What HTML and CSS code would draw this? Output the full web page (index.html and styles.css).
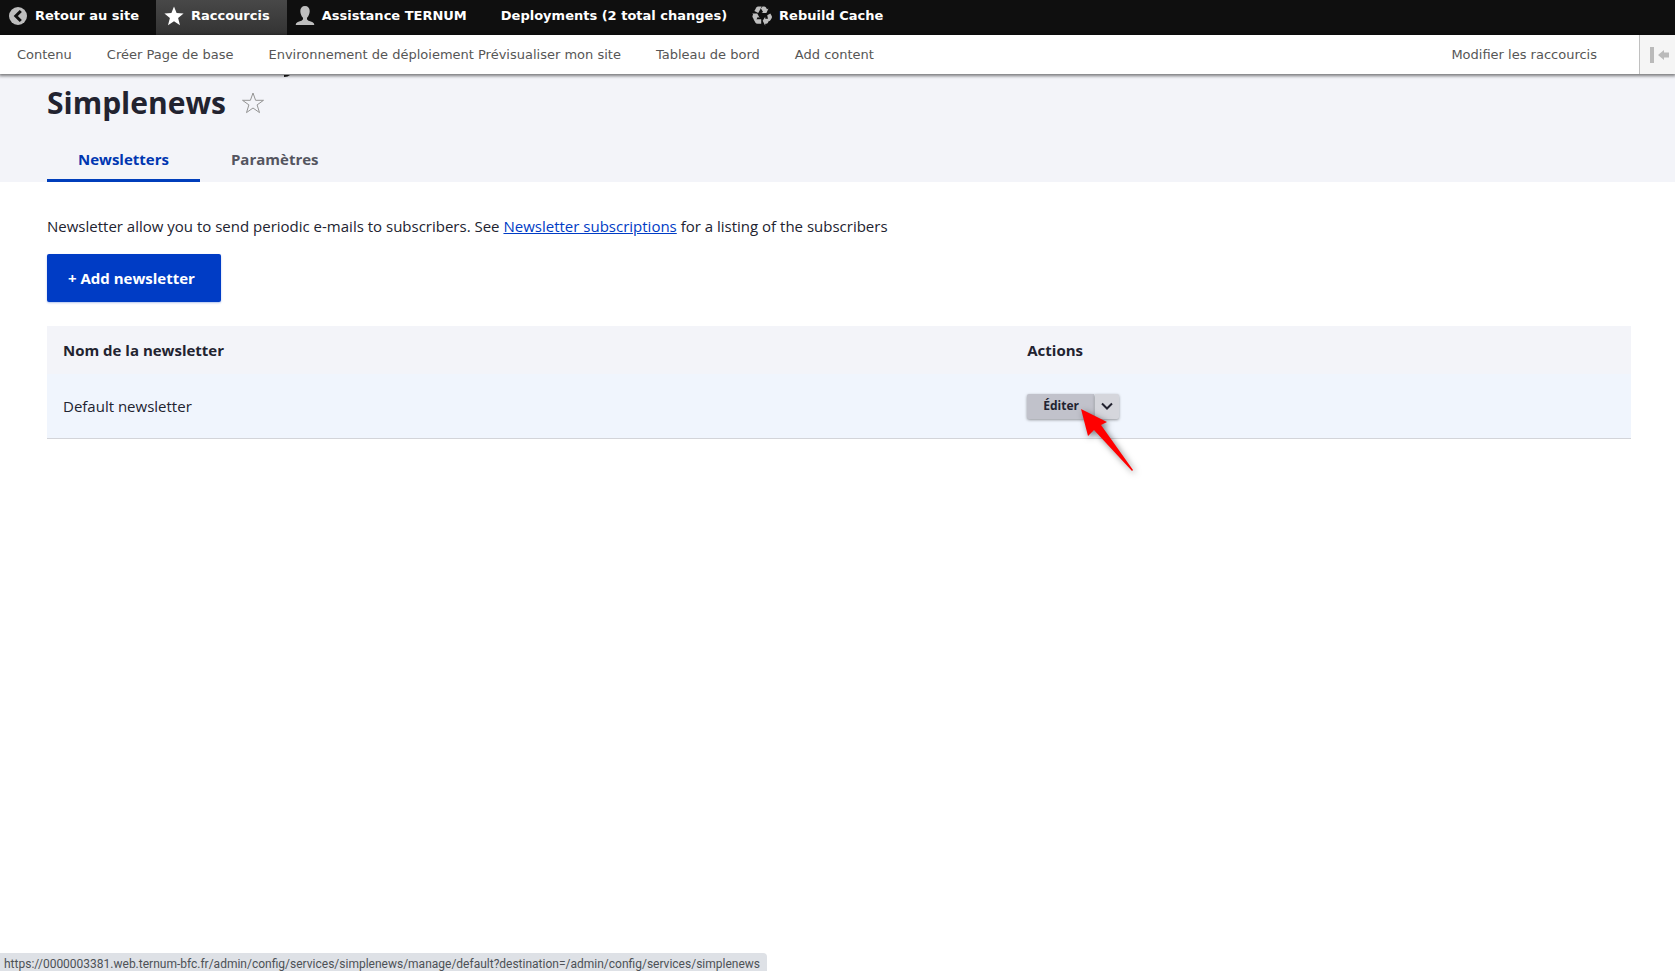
FILE: index.html
```html
<!DOCTYPE html>
<html lang="fr">
<head>
<meta charset="utf-8">
<title>Simplenews</title>
<link rel="stylesheet" href="styles.css">
</head>
<body>
<nav class="toolbar" aria-label="Barre d'outils">
  <a class="tool tool-icon" href="#"><svg class="icon" viewBox="0 0 20 20"><circle cx="10" cy="10" r="9" fill="#bebebe"/><path d="M12.8 5 7.800 10l5 5" fill="none" stroke="#0f0f0f" stroke-width="3"/></svg>Retour au site</a>
  <a class="tool tool-icon tool-active" href="#"><svg class="icon" viewBox="0 0 20 20"><path d="M10 .4l2.600 6.700 7 .4-5.500 4.500 1.900 7.200L10 15.200 4 19.200 5.900 12 .4 7.500l7-.4z" fill="#fff"/></svg>Raccourcis</a>
  <a class="tool tool-icon" href="#"><svg class="icon" viewBox="0 0 20 20"><path d="M10 0C7 0 5.300 2.100 5.300 5c0 2.800 1.200 5.300 2.500 6.600.6 1.500.1 2.600-1.300 3.100C3 15.800.8 16.600.8 18.200V19h18.400v-.8c0-1.600-2.200-2.400-5.700-3.500-1.400-.5-1.900-1.600-1.300-3.100 1.300-1.300 2.500-3.800 2.500-6.600C14.700 2.100 13 0 10 0z" fill="#bebebe"/></svg>Assistance TERNUM</a>
  <a class="tool" href="#">Deployments (2 total changes)</a>
  <a class="tool tool-icon" href="#"><svg class="icon" viewBox="0 0 20 20"><g fill="#bebebe"><path d="M6.200.4h3.500L7.400 5 6.200 7 2.400 4.900 4.300 1.600Q5 .4 6.200.4z"/><path d="M10.500.4h1.600q1.200 0 1.900 1.200l1 1.700 1.500-.9-2.100 4.600H9.500l1.600-1-2.200-3.600z"/><path d="M15.200 9.200 18.300 7.400l1.300 2.300q.8 1.400-.1 2.700l-1.100 1.800q-.6 1-1.900 1z"/><path d="M10.700 14.700l2.500-4v2h4.600l-1.900 4q-.5 1.100-1.800 1.100h-.9v2z"/><path d="M4.300 13.200h4.900v4.600H5.600q-1.600 0-2.300-1.400L1.200 12.600z"/><path d="M.3 7.600h5l2.300 4.500-1.800-1-2.400 4.100L.7 11.600q-.6-1.200 0-2.300l.4-.8z"/></g></svg>Rebuild Cache</a>
</nav>
<nav class="tray" aria-label="Raccourcis">
  <a class="shortcut" href="#">Contenu</a>
  <a class="shortcut" href="#">Créer Page de base</a>
  <a class="shortcut" href="#">Environnement de déploiement Prévisualiser mon site</a>
  <a class="shortcut" href="#">Tableau de bord</a>
  <a class="shortcut" href="#">Add content</a>
  <a class="shortcut shortcut-edit" href="#">Modifier les raccourcis</a>
  <button class="orient" type="button" aria-label="Orientation verticale"><svg class="orient-icon" viewBox="0 0 20 16"><path d="M0 0h4v16H0zM8 8l6-5v2.500h5v5h-5V13z" fill="#bababa"/></svg></button>
</nav>
<header class="header">
  <svg class="tail" viewBox="0 0 7 3" aria-hidden="true"><path d="M0 0h6Q4 2 0 2z" fill="#111"/></svg>
  <div class="title-row">
    <h1 class="title">Simplenews</h1>
    <button class="star" type="button" aria-label="Ajouter aux raccourcis"><svg class="star-icon" viewBox="0 0 24 24"><path d="M12 2l2.600 7.300h7.900l-6.400 4.600 2.400 7.700L12 17l-6.500 4.600 2.400-7.700L1.500 9.300h7.900z" fill="none" stroke="#949494" stroke-width="1"/></svg></button>
  </div>
  <nav class="tabs" aria-label="Onglets">
    <a class="tab tab-active" href="#">Newsletters</a>
    <a class="tab" href="#">Paramètres</a>
  </nav>
</header>
<main class="content">
  <p class="help">Newsletter allow you to send periodic e-mails to subscribers. See <a class="link" href="#">Newsletter subscriptions</a> for a listing of the subscribers</p>
  <a class="add" href="#">+ Add newsletter</a>
  <table class="table">
    <thead><tr><th class="name-col">Nom de la newsletter</th><th>Actions</th></tr></thead>
    <tbody><tr><td>Default newsletter</td><td>
      <div class="dropbutton">
        <a class="edit" href="#">Éditer</a><button class="toggle" type="button" aria-label="Lister les actions"><svg class="chevron" viewBox="0 0 14 9"><path d="M2 1.500l5 5 5-5" fill="none" stroke="#222330" stroke-width="2"/></svg></button>
        <svg class="pointer" viewBox="0 0 60 70" aria-hidden="true"><path d="M3 3 29 16 23 19 55 64 54 65 16 24 10 30z" fill="#f00"/></svg>
      </div>
    </td></tr></tbody>
  </table>
</main>
<div class="status">https://0000003381.web.ternum-bfc.fr/admin/config/services/simplenews/manage/default?destination=/admin/config/services/simplenews</div>
</body>
</html>
```
FILE: styles.css
```css
* { box-sizing: border-box; }
body {
  min-height: 100vh;
  margin: 0;
  background: #fff;
  color: #222330;
  font: 15px/24px "Segoe UI", "Open Sans", "Noto Sans", sans-serif;
}
a { color: inherit; text-decoration: none; }
button { border: 0; padding: 0; background: none; }
svg { display: block; }

.toolbar {
  display: flex;
  height: 35px;
  background: #0f0f0f;
  color: #fff;
  font: bold 13px/31px Verdana, "DejaVu Sans", sans-serif;
}
.tool { display: flex; padding: 0 17px; white-space: nowrap; }
.tool-icon { padding-left: 8px; }
.tool-active { background: linear-gradient(#484848, #333); }
.icon { width: 20px; height: 20px; margin: 6px 7px 0 0; }

.tray {
  position: relative;
  z-index: 1;
  display: flex;
  height: 39px;
  background: #fff;
  color: #565656;
  font: 13px/39px Verdana, "DejaVu Sans", sans-serif;
  box-shadow: 0 1px 3px 1px rgba(0, 0, 0, 0.5);
}
.shortcut { padding: 0 18px 0 17px; white-space: nowrap; }
.shortcut-edit { margin-left: auto; padding-right: 42px; }
.orient {
  width: 36px;
  padding-left: 10px;
  border-left: 1px solid #c0c0c0;
  background: #f5f5f5;
}
.orient-icon { width: 20px; height: 16px; }

.header {
  position: relative;
  height: 108px;
  padding: 7px 47px 0;
  background: #f3f4f9;
}
.tail { position: absolute; z-index: 2; left: 284px; top: 1px; width: 7px; height: 3px; }
.title-row { display: flex; align-items: center; gap: 15px; height: 43px; }
.title { margin: 0; font-size: 30px; line-height: 40px; font-weight: 700; }
.star-icon { width: 24px; height: 24px; }
.tabs { display: flex; height: 58px; }
.tab {
  padding: 23px 31px 0;
  color: #545560;
  font-weight: 700;
}
.tab-active { color: #0036b1; border-bottom: 3px solid #003ebb; }

.content { padding: 32px 44px 48px 47px; }
.help { margin: 0 0 16px; }
.link { color: #003cc5; text-decoration: underline; }
.add {
  display: inline-block;
  padding: 12px 26px 12px 21px;
  border-radius: 2px;
  background: #003cc5;
  color: #fff;
  font-weight: 700;
  box-shadow: 0 1px 2px rgba(0, 60, 197, 0.3);
}
.table { width: 100%; margin-top: 24px; border-collapse: separate; border-spacing: 0; }
.name-col { width: 61%; }
th { height: 48px; padding: 0 16px; background: #f3f4f9; text-align: left; }
td { height: 65px; padding: 0 16px; background: #f0f5fd; border-bottom: 1px solid #d3d4d9; }
th + th, td + td { padding-left: 14px; }

.dropbutton { position: relative; display: flex; gap: 1px; width: max-content; color: #222330; }
.edit, .toggle { height: 25px; box-shadow: 0 1px 3px rgba(0, 0, 0, 0.4); }
.edit {
  padding: 0 15px 0 16px;
  border-radius: 2px 0 0 2px;
  background: #c1c2cb;
  font-size: 12px;
  font-weight: 700;
}
.toggle { width: 24px; padding-left: 5px; border-radius: 0 2px 2px 0; background: #d5d6dc; }
.chevron { width: 14px; height: 9px; }
.pointer {
  position: absolute;
  left: 51px;
  top: 12px;
  width: 60px;
  height: 70px;
  filter: drop-shadow(2px 2px 3px rgba(0, 0, 0, 0.5));
}

.status {
  position: fixed;
  left: 0;
  bottom: 0;
  padding: 4px 7px 0 4px;
  border-radius: 0 4px 0 0;
  background: #dee1e6;
  color: #4d5156;
  font: 12px/14px "Segoe UI", Roboto, sans-serif;
  white-space: nowrap;
}
```
